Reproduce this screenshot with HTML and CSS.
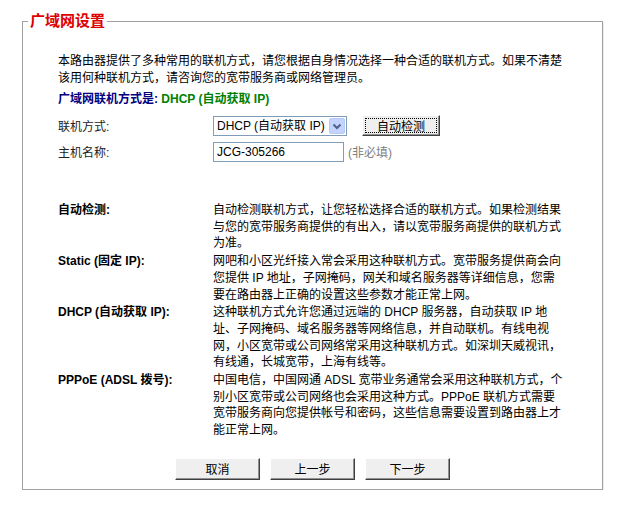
FILE: index.html
```html
<!DOCTYPE html>
<html lang="zh-CN">
<head>
    <meta charset="UTF-8">
    <title>广域网设置</title>
    <link rel="stylesheet" href="styles.css">
</head>
<body>

<fieldset class="panel">
    <legend>广域网设置</legend>

    <div class="content">
        <p class="intro">本路由器提供了多种常用的联机方式，请您根据自身情况选择一种合适的联机方式。如果不清楚该用何种联机方式，请咨询您的宽带服务商或网络管理员。</p>

        <p class="current"><span class="cur-label">广域网联机方式是:</span> <span class="cur-value">DHCP (自动获取 IP)</span></p>

        <div class="form-row first">
            <label for="wan-type">联机方式:</label>
            <span class="select-wrap">
                <select id="wan-type">
                    <option>DHCP (自动获取 IP)</option>
                    <option>Static (固定 IP)</option>
                    <option>PPPoE (ADSL 拨号)</option>
                </select>
                <svg class="select-arrow" width="16" height="16" viewBox="0 0 16 16">
                    <rect x="0.5" y="0.5" width="15" height="15" rx="1.5" fill="#c3d3fd" stroke="#b7c9f5"/>
                    <path d="M4.5 6.5 L8 10 L11.5 6.5" fill="none" stroke="#4d6185" stroke-width="2"/>
                </svg>
            </span>
            <button class="btn btn-detect" type="button">自动检测</button>
        </div>

        <div class="form-row">
            <label for="hostname">主机名称:</label>
            <input type="text" id="hostname" value="JCG-305266">
            <span class="hint">(非必填)</span>
        </div>

        <dl class="help">
            <dt>自动检测:</dt>
            <dd>自动检测联机方式，让您轻松选择合适的联机方式。如果检测结果<br>与您的宽带服务商提供的有出入，请以宽带服务商提供的联机方式<br>为准。</dd>

            <dt>Static (固定 IP):</dt>
            <dd>网吧和小区光纤接入常会采用这种联机方式。宽带服务提供商会向<br>您提供 IP 地址，子网掩码，网关和域名服务器等详细信息，您需<br>要在路由器上正确的设置这些参数才能正常上网。</dd>

            <dt>DHCP (自动获取 IP):</dt>
            <dd>这种联机方式允许您通过远端的 DHCP 服务器，自动获取 IP 地<br>址、子网掩码、域名服务器等网络信息，并自动联机。有线电视<br>网，小区宽带或公司网络常采用这种联机方式。如深圳天威视讯，<br>有线通，长城宽带，上海有线等。</dd>

            <dt>PPPoE (ADSL 拨号):</dt>
            <dd>中国电信，中国网通 ADSL 宽带业务通常会采用这种联机方式，个<br>别小区宽带或公司网络也会采用这种方式。PPPoE 联机方式需要<br>宽带服务商向您提供帐号和密码，这些信息需要设置到路由器上才<br>能正常上网。</dd>
        </dl>
    </div>

    <div class="actions">
        <button class="btn btn-wide" type="button">取消</button>
        <button class="btn btn-wide" type="button">上一步</button>
        <button class="btn btn-wide" type="button">下一步</button>
    </div>
</fieldset>

</body>
</html>
```

FILE: styles.css
```css
body {
    margin: 0;
    font-family: "Liberation Sans", "Noto Sans CJK SC", sans-serif;
    font-size: 12px;
    color: #000;
    background: #fff;
}

.panel {
    width: 579px;
    margin: 13px 0 0 22px;
    padding: 0 0 9px 0;
    border: 1px solid #a0a0a0;
    box-shadow: 1px 1px 0 #eeeeee;
    min-width: 0;
}

.panel legend {
    margin-left: 5px;
    padding: 0 2px;
    color: #dd0000;
    font-size: 15px;
    font-weight: bold;
    line-height: 16px;
}

.content {
    padding: 0 30px 0 35px;
}

.intro {
    margin: 24px 0 0;
    line-height: 17px;
}

.current {
    margin: 4px 0 0;
    line-height: 17px;
    font-weight: bold;
}

.cur-label {
    color: #000080;
}

.cur-value {
    color: #008000;
}

.form-row {
    display: flex;
    align-items: center;
    height: 21px;
    margin-top: 5px;
}

.form-row.first {
    margin-top: 7px;
}

.form-row label {
    width: 155px;
    color: #222;
}

.select-wrap {
    position: relative;
    display: inline-block;
}

.select-wrap select {
    appearance: none;
    -webkit-appearance: none;
    width: 134px;
    height: 20px;
    padding: 0 0 0 3px;
    border: 1px solid #7f9db9;
    border-radius: 0;
    background: #fff;
    font-family: "Liberation Sans", "Noto Sans CJK SC", sans-serif;
    font-size: 12px;
    color: #000;
}

.select-arrow {
    position: absolute;
    right: 2px;
    top: 2px;
    pointer-events: none;
}

input[type="text"] {
    width: 131px;
    height: 20px;
    padding: 0 3px;
    border: 1px solid #7f9db9;
    box-sizing: border-box;
    font-family: "Liberation Sans", "Noto Sans CJK SC", sans-serif;
    font-size: 12px;
    color: #000;
}

.hint {
    margin-left: 4px;
    color: #808080;
}

.btn {
    height: 21px;
    padding: 0;
    background: #efefef;
    border: 1px solid;
    border-color: #fff #404040 #404040 #fff;
    box-shadow: inset -1px -1px 0 #909090;
    font-family: "Liberation Sans", "Noto Sans CJK SC", sans-serif;
    font-size: 12px;
    color: #000;
    cursor: pointer;
}

.btn-detect {
    width: 78px;
    margin-left: 15px;
    outline: 1px dotted #000;
    outline-offset: -4px;
}

.help {
    display: grid;
    grid-template-columns: 155px auto;
    row-gap: 1px;
    margin: 40px 0 0;
    line-height: 16.7px;
}

.help dt {
    font-weight: bold;
}

.help dd {
    margin: 0;
    white-space: nowrap;
}

.actions {
    display: flex;
    justify-content: center;
    gap: 10px;
    margin-top: 19px;
}

.btn-wide {
    width: 85px;
    height: 22px;
}
```
